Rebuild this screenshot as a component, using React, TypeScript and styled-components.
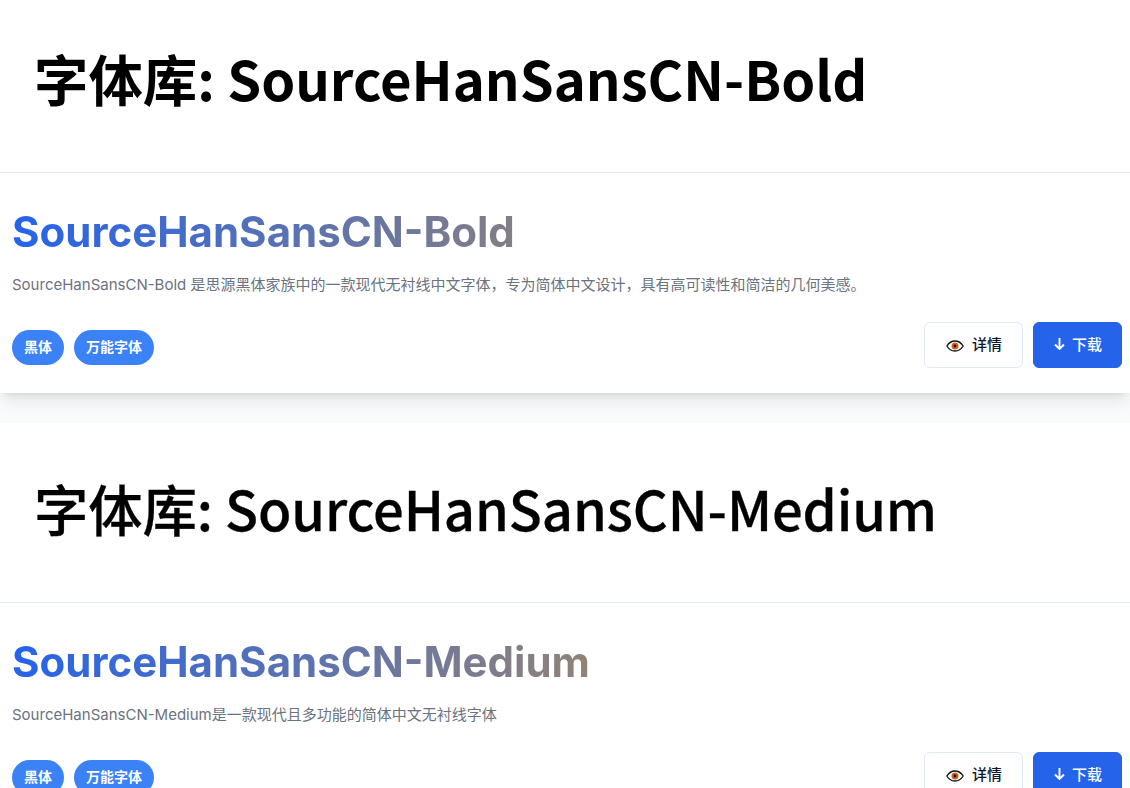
import React from 'react';
import styled, { createGlobalStyle } from 'styled-components';

const GlobalStyle = createGlobalStyle`
  html, body {
    margin: 0;
    padding: 0;
    background: #f8fafc;
    overflow: hidden;
  }
`;

const Page = styled.div`
  display: flex;
  flex-direction: column;
  gap: 30px;
  margin-top: -7px;
  font-family: Inter, "Noto Sans CJK SC", sans-serif;
`;

const Card = styled.section`
  background: #fff;
  box-shadow: 0 10px 15px -3px rgba(0, 0, 0, 0.1), 0 4px 6px -4px rgba(0, 0, 0, 0.1);
`;

const Header = styled.header`
  height: 180px;
  box-sizing: border-box;
  display: flex;
  align-items: center;
  padding: 0 36px 10px 34px;
  border-bottom: 1px solid #e2e8f0;
`;

const PageTitle = styled.h1<{ $medium?: boolean }>`
  margin: 0;
  font-family: "Noto Sans CJK SC", sans-serif;
  font-size: 54.4px;
  line-height: 1.2;
  font-weight: ${(props: { $medium?: boolean }) => (props.$medium ? 500 : 700)};
  letter-spacing: ${(props: { $medium?: boolean }) => (props.$medium ? '-0.12px' : '0')};
  -webkit-text-stroke: ${(props: { $medium?: boolean }) => (props.$medium ? '0.3px #000' : '0')};
  color: #000;
`;

const Body = styled.div`
  padding: 32px 8px 25px 12px;
  height: 220px;
  box-sizing: border-box;
`;

const FontName = styled.h2`
  margin: 0;
  font-size: 42px;
  line-height: 54px;
  font-weight: 700;
  background: linear-gradient(90deg, #2563eb, #f59e0b);
  -webkit-background-clip: text;
  background-clip: text;
  color: transparent;
`;

const Description = styled.p`
  margin: 14px 0 0;
  font-size: 15px;
  line-height: 24px;
  color: #6b7280;
`;

const Footer = styled.div`
  display: flex;
  align-items: center;
  justify-content: space-between;
  margin-top: 25px;
`;

const Tags = styled.div`
  display: flex;
  gap: 10px;
  margin-top: 4px;
`;

const Tag = styled.span`
  display: flex;
  align-items: center;
  height: 35px;
  box-sizing: border-box;
  padding: 0 12px 3px;
  border-radius: 18px;
  background: #3b82f6;
  color: #fff;
  font-size: 14px;
  font-weight: 600;
`;

const Actions = styled.div`
  display: flex;
  gap: 10px;
`;

const ActionButton = styled.button<{ $primary?: boolean }>`
  display: flex;
  align-items: center;
  justify-content: center;
  gap: ${(props: { $primary?: boolean }) => (props.$primary ? '6px' : '8px')};
  height: 46px;
  box-sizing: border-box;
  padding: ${(props: { $primary?: boolean }) => (props.$primary ? '0 0 3px' : '0 0 3px 1px')};
  width: ${(props: { $primary?: boolean }) => (props.$primary ? '89px' : '99px')};
  border-radius: 6px;
  border: 1px solid ${(props: { $primary?: boolean }) => (props.$primary ? '#2563eb' : '#e2e8f0')};
  background: ${(props: { $primary?: boolean }) => (props.$primary ? '#2563eb' : '#fff')};
  color: ${(props: { $primary?: boolean }) => (props.$primary ? '#fff' : '#0f172a')};
  font-family: inherit;
  font-size: 15px;
  font-weight: 500;
`;

const EyeGlyph = styled.svg`
  position: relative;
  top: 2px;
`;

const EyeIcon = () => (
  <EyeGlyph width="18" height="12" viewBox="0 0 18 12" aria-hidden="true">
    <path d="M0.8 6C3 2.600 5.800 1 9 1s6 1.600 8.200 5C15 9.400 12.200 11 9 11S3 9.400 0.800 6Z" fill="#fff" stroke="#111" strokeWidth="1.300" />
    <circle cx="9" cy="6" r="3.500" fill="#d2601a" />
    <circle cx="9" cy="6" r="1.400" fill="#111" />
  </EyeGlyph>
);

const ArrowIcon = () => (
  <svg width="13" height="13" viewBox="0 0 13 13" fill="none" stroke="#fff" strokeWidth="1.900" aria-hidden="true">
    <path d="M6.500 1v11M2 7.500l4.500 4.500 4.500-4.500" />
  </svg>
);

const fonts = [
  {
    name: 'SourceHanSansCN-Bold',
    medium: false,
    description: 'SourceHanSansCN-Bold 是思源黑体家族中的一款现代无衬线中文字体，专为简体中文设计，具有高可读性和简洁的几何美感。',
  },
  {
    name: 'SourceHanSansCN-Medium',
    medium: true,
    description: 'SourceHanSansCN-Medium是一款现代且多功能的简体中文无衬线字体',
  },
];

const App: React.FC = () => (
  <>
    <GlobalStyle />
    <Page>
      {fonts.map((font) => (
        <Card key={font.name}>
          <Header>
            <PageTitle $medium={font.medium}>字体库: {font.name}</PageTitle>
          </Header>
          <Body>
            <FontName>{font.name}</FontName>
            <Description>{font.description}</Description>
            <Footer>
              <Tags>
                <Tag>黑体</Tag>
                <Tag>万能字体</Tag>
              </Tags>
              <Actions>
                <ActionButton>
                  <EyeIcon />
                  详情
                </ActionButton>
                <ActionButton $primary>
                  <ArrowIcon />
                  下载
                </ActionButton>
              </Actions>
            </Footer>
          </Body>
        </Card>
      ))}
    </Page>
  </>
);

export default App;
